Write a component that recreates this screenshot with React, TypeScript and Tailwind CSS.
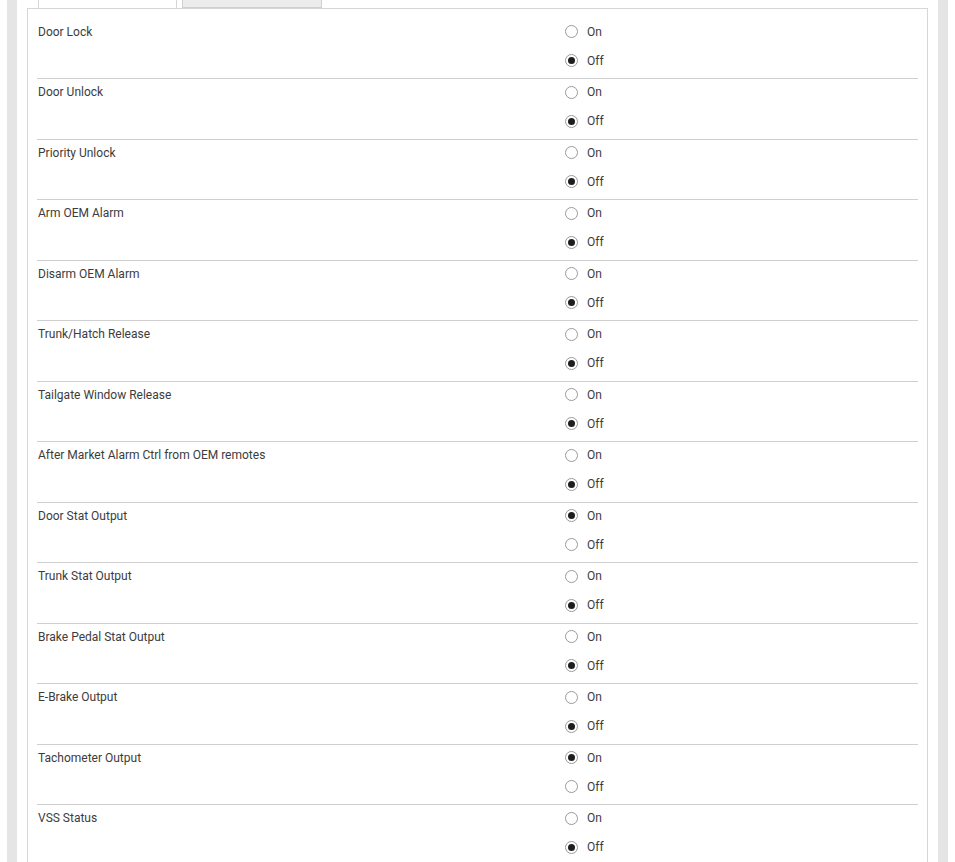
import React from 'react';

type Setting = { label: string; on: boolean };

const settings: Setting[] = [
  { label: 'Door Lock', on: false },
  { label: 'Door Unlock', on: false },
  { label: 'Priority Unlock', on: false },
  { label: 'Arm OEM Alarm', on: false },
  { label: 'Disarm OEM Alarm', on: false },
  { label: 'Trunk/Hatch Release', on: false },
  { label: 'Tailgate Window Release', on: false },
  { label: 'After Market Alarm Ctrl from OEM remotes', on: false },
  { label: 'Door Stat Output', on: true },
  { label: 'Trunk Stat Output', on: false },
  { label: 'Brake Pedal Stat Output', on: false },
  { label: 'E-Brake Output', on: false },
  { label: 'Tachometer Output', on: true },
  { label: 'VSS Status', on: false },
];

const Radio: React.FC<{ checked: boolean; text: string }> = ({ checked, text }) => (
  <label className="flex items-center h-[26px] gap-[9px]">
    <span className="w-[13px] h-[13px] rounded-full border border-[#9a9a9a] bg-white flex items-center justify-center">
      {checked && <span className="w-[7px] h-[7px] rounded-full bg-[#1e1e1e]" />}
    </span>
    <span>{text}</span>
  </label>
);

const SettingRow: React.FC<{ item: Setting }> = ({ item }) => (
  <div className="flex h-[60.5px] border-b border-[#cfcfcf] shrink-0">
    <div className="w-[528px] pl-[1px] h-[26px] flex items-center">{item.label}</div>
    <div className="flex flex-col gap-[3px]">
      <Radio checked={item.on} text="On" />
      <Radio checked={!item.on} text="Off" />
    </div>
  </div>
);

export default function App() {
  return (
    <div className="h-[862px] overflow-hidden bg-white px-[7px] text-[12px] text-[#3c3c3c] font-['Roboto',sans-serif]">
      <div className="h-full border-x-[10px] border-[#e5e5e5] px-[10px]">
        {/* Tabs */}
        <div className="flex h-[8px] pl-[11px] gap-[5px]">
          <div className="w-[139px] h-full border-x border-[#d6d6d6] bg-white" />
          <div className="w-[140px] h-full border-x border-b border-[#d0d0d0] bg-[#ececec]" />
        </div>

        {/* Panel */}
        <div className="h-full border border-[#d6d6d6] border-b-0 pt-[9.5px] pl-[9px] pr-[9px] flex flex-col">
          {settings.map((s) => (
            <SettingRow key={s.label} item={s} />
          ))}
        </div>
      </div>
    </div>
  );
}
